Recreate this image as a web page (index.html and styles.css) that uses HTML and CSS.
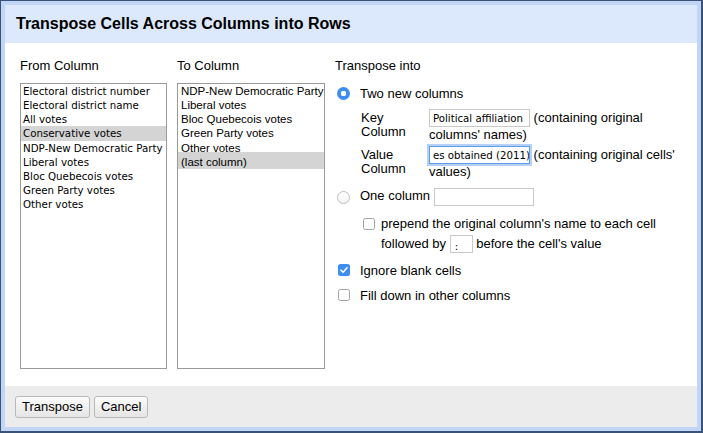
FILE: index.html
```html
<!DOCTYPE html>
<html>
<head>
<meta charset="utf-8">
<link rel="stylesheet" href="styles.css">
</head>
<body>
<div class="dialog">
  <div class="panel">
    <div class="header">Transpose Cells Across Columns into Rows</div>
    <div class="body">
      <div class="col col-from">
        <div class="label">From Column</div>
        <div class="list list-from">
          <div class="opt">Electoral district number</div>
          <div class="opt">Electoral district name</div>
          <div class="opt">All votes</div>
          <div class="opt sel">Conservative votes</div>
          <div class="opt">NDP-New Democratic Party votes</div>
          <div class="opt">Liberal votes</div>
          <div class="opt">Bloc Quebecois votes</div>
          <div class="opt">Green Party votes</div>
          <div class="opt">Other votes</div>
        </div>
      </div>
      <div class="col col-to">
        <div class="label">To Column</div>
        <div class="list list-to">
          <div class="opt">NDP-New Democratic Party votes</div>
          <div class="opt">Liberal votes</div>
          <div class="opt">Bloc Quebecois votes</div>
          <div class="opt">Green Party votes</div>
          <div class="opt">Other votes</div>
          <div class="opt sel">(last column)</div>
        </div>
      </div>
      <div class="col col-opts">
        <div class="label">Transpose into</div>
        <div class="choice choice-two"><span class="radio on"></span><span>Two new columns</span></div>
        <div class="fields">
          <div class="fl">Key<br>Column</div>
          <div class="fv"><span class="input">Political affiliation</span> (containing original columns' names)</div>
          <div class="fl">Value<br>Column</div>
          <div class="fv"><span class="input focus">es obtained (2011)</span> (containing original cells' values)</div>
        </div>
        <div class="choice choice-one"><span class="radio"></span><span>One column <span class="input wide"></span></span></div>
        <div class="prepend">
          <span class="check"></span>
          <div class="prepend-text">prepend the original column's name to each cell<br>followed by <span class="input tiny">:</span> before the cell's value</div>
        </div>
        <div class="choice choice-ignore"><span class="check on"><svg viewBox="0 0 12 12" width="12" height="12"><path d="M3 6.2 L5.1 8.3 L9 3.8" fill="none" stroke="#fff" stroke-width="1.6" stroke-linecap="round" stroke-linejoin="round"/></svg></span><span>Ignore blank cells</span></div>
        <div class="choice choice-fill"><span class="check"></span><span>Fill down in other columns</span></div>
      </div>
    </div>
    <div class="footer">
      <button class="btn">Transpose</button>
      <button class="btn">Cancel</button>
    </div>
  </div>
</div>
</body>
</html>
```

FILE: styles.css
```css
* { box-sizing: border-box; }
html, body { margin: 0; padding: 0; }
body {
  width: 703px;
  height: 433px;
  overflow: hidden;
  background: #fff;
  color: #000;
  font-family: "Liberation Sans", Arial, sans-serif;
  font-size: 13px;
}
.dialog {
  width: 703px;
  height: 433px;
  border-style: solid;
  border-color: #3a5275;
  border-width: 1px 2px 2px 1px;
  background: #c1d6f7;
  padding: 4px;
}
.panel {
  height: 100%;
  display: flex;
  flex-direction: column;
  background: #fff;
}
.header {
  flex: none;
  height: 38px;
  background: #dce8fb;
  padding: 0 11px;
  font-weight: bold;
  font-size: 16px;
  line-height: 37px;
}
.body {
  flex: 1;
  display: flex;
  gap: 10px;
  padding: 15px 0 17px 15px;
  min-height: 0;
}
.col { display: flex; flex-direction: column; }
.col-from { width: 147px; }
.col-to { width: 148px; }
.col-opts { flex: 1; padding-right: 12px; }
.label {
  line-height: 15px;
  height: 15px;
  margin-bottom: 10px;
}
.list {
  flex: 1;
  border: 1px solid #9a9a9a;
  overflow: hidden;
}
.opt {
  white-space: nowrap;
  height: 14.15px;
  line-height: 14px;
  padding-left: 2px;
  overflow: hidden;
}
.list-from .opt {
  font-family: "DejaVu Sans", Verdana, sans-serif;
  font-size: 10.25px;
}
.list-to .opt {
  font-size: 11.5px;
  padding-left: 3px;
}
.opt.sel { background: #d4d4d4; }
.list-to .opt.sel { box-shadow: 0 -3px 0 #d4d4d4; height: 14.5px; }

.choice {
  display: flex;
  align-items: center;
  height: 20px;
  white-space: nowrap;
}
.choice-two { margin-top: 2px; height: 16px; }
.choice-one { margin-top: 8px; height: 20px; }
.choice-ignore { margin-top: 6px; }
.choice-fill { margin-top: 5px; }

.radio {
  flex: none;
  width: 13px;
  height: 13px;
  border-radius: 50%;
  border: 1px solid #bdbdbd;
  background: linear-gradient(#fff, #f4f4f4);
  margin: 0 10px 0 2px;
}
.radio.on {
  border: none;
  background: radial-gradient(circle, #fff 0 2.6px, #3d8ef4 3px);
}
.check {
  flex: none;
  width: 12px;
  height: 12px;
  border: 1px solid #a2a2a2;
  border-radius: 2.5px;
  background: #fff;
  margin: 0 10px 0 3px;
  display: flex;
}
.check.on { border: none; background: #3d8ef4; }

.fields {
  display: grid;
  grid-template-columns: 68px 1fr;
  row-gap: 4px;
  margin-top: 8px;
  margin-left: 26px;
}
.fl { line-height: 14px; padding-top: 2px; }
.fv { line-height: 14px; }
.input {
  display: inline-block;
  vertical-align: middle;
  height: 18px;
  width: 101px;
  border: 1px solid #c9c9c9;
  background: #fff;
  font-family: "DejaVu Sans", Verdana, sans-serif;
  font-size: 10.2px;
  line-height: 17px;
  padding: 0 2px 0 3px;
  overflow: hidden;
  white-space: nowrap;
  margin-bottom: 1px;
}
.input.focus {
  border-color: #5b9bf0;
  box-shadow: 0 0 0 2px #b6d1f8;
}
.input.wide { width: 100px; margin: 0; }
.input.tiny { width: 23px; padding: 2px 0 0 4px; }
.prepend {
  display: flex;
  align-items: flex-start;
  margin-left: 28px;
  margin-top: 7px;
}
.prepend .check { margin: 4px 6px 0 0; }
.prepend-text { line-height: 20px; }

.footer {
  flex: none;
  height: 41px;
  background: #ececec;
  padding: 10px 10px;
  display: flex;
  align-items: flex-start;
  gap: 4px;
}
.btn {
  height: 22px;
  padding: 0 6px;
  border: 1px solid #b9b9b9;
  border-radius: 3px;
  background: linear-gradient(#fbfbfb, #e5e5e5);
  font-family: "Liberation Sans", Arial, sans-serif;
  font-size: 13px;
  color: #000;
  line-height: 20px;
}
```
